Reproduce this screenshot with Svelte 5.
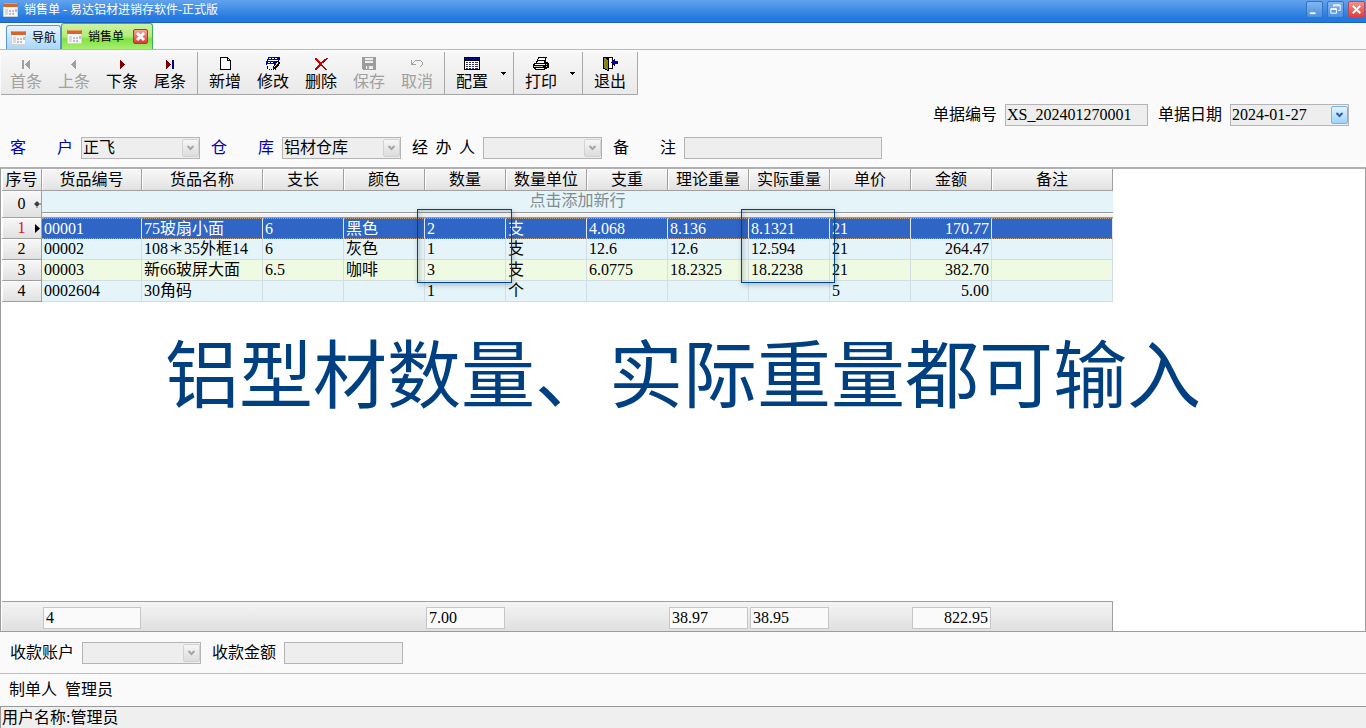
<script>
  const columns = [
    { name: '货品编号', width: 100 },
    { name: '货品名称', width: 121 },
    { name: '支长', width: 81 },
    { name: '颜色', width: 81 },
    { name: '数量', width: 81 },
    { name: '数量单位', width: 81 },
    { name: '支重', width: 81 },
    { name: '理论重量', width: 81 },
    { name: '实际重量', width: 81 },
    { name: '单价', width: 81 },
    { name: '金额', width: 81 },
    { name: '备注', width: 121 }
  ];
  const rows = [
    ['00001', '75玻扇小面', '6', '黑色', '2', '支', '4.068', '8.136', '8.1321', '21', '170.77', ''],
    ['00002', '108＊35外框14', '6', '灰色', '1', '支', '12.6', '12.6', '12.594', '21', '264.47', ''],
    ['00003', '新66玻屏大面', '6.5', '咖啡', '3', '支', '6.0775', '18.2325', '18.2238', '21', '382.70', ''],
    ['0002604', '30角码', '', '', '1', '个', '', '', '', '5', '5.00', '']
  ];
  const totals = ['4', '', '', '', '7.00', '', '', '38.97', '38.95', '', '822.95', ''];
  const groups = [
    [
      { icon: 'first', text: '首条', off: true },
      { icon: 'prev', text: '上条', off: true },
      { icon: 'next', text: '下条' },
      { icon: 'last', text: '尾条' }
    ],
    [
      { icon: 'new', text: '新增' },
      { icon: 'edit', text: '修改' },
      { icon: 'delete', text: '删除' },
      { icon: 'save', text: '保存', off: true },
      { icon: 'undo', text: '取消', off: true }
    ],
    [{ icon: 'config', text: '配置', menu: true }],
    [{ icon: 'print', text: '打印', menu: true }],
    [{ icon: 'exit', text: '退出' }]
  ];
  const combos = [
    { id: 'customer', chars: ['客', '户'], value: '正飞', key: true },
    { id: 'store', chars: ['仓', '库'], value: '铝材仓库', key: true },
    { id: 'agent', chars: ['经', '办', '人'], value: '' }
  ];
</script>

{#snippet form()}
  <svg class="form-icon" viewBox="0 0 16 16" aria-hidden="true">
    <rect x="0" y="1" width="15" height="14" rx="1" fill="#d5d2cf" />
    <rect x="1" y="5" width="13" height="9" fill="#f7f7f8" />
    <rect x="0" y="1" width="15" height="4" rx="1" fill="#d9642b" />
    <rect x="1" y="1" width="13" height="1" fill="#ef9a62" />
    <path d="M2 7h3v6H2z" fill="#d6dae4" />
    <path d="M6 8h2v2H6zM9 8h2v2H9zM12 7h2v3h-2zM6 11h2v2H6zM9 11h2v2H9z" fill="#b9bfcf" />
  </svg>
{/snippet}

{#snippet chevron()}
  <svg viewBox="0 0 15 17" aria-hidden="true">
    <path d="M4 6h2v1h1v1h1V7h1V6h2v2h-1v1H9v1H8v1H7v-1H6V9H5V8H4z" fill="currentColor" />
  </svg>
{/snippet}

{#snippet glyph(name)}
  <svg class="glyph" viewBox="0 0 16 16" shape-rendering="crispEdges" aria-hidden="true">
    {#if name === 'first'}
      <path d="M4 4h2v9H4zM12 4v9h-1v-1h-1v-1H9v-1H8V9H7V8h1V7h1V6h1V5h1V4z" fill="#a0a0a0" />
    {:else if name === 'prev'}
      <path d="M10 4v9H9v-1H8v-1H7v-1H6V9H5V8h1V7h1V6h1V5h1V4z" fill="#a0a0a0" />
    {:else if name === 'next'}
      <path d="M6 4v9h1v-1h1v-1h1v-1h1V9h1V8h-1V7H9V6H8V5H7V4z" fill="#800000" />
    {:else if name === 'last'}
      <path d="M4 4v9h1v-1h1v-1h1v-1h1V9h1V8H8V7H7V6H6V5H5V4z" fill="#800000" />
      <path d="M10 4h2v9h-2z" fill="#000080" />
    {:else if name === 'new'}
      <path d="M3 1h8v1h1v1h1v1h1v10H3z" fill="#000" />
      <path d="M4 2h6v3h3v8H4z" fill="#fff" />
      <path d="M11 3h1v1h-1z" fill="#fff" />
    {:else if name === 'edit'}
      <path d="M3 1h12v3h-1v2h-1v3H1V5h1V3h1z" fill="#0000b4" />
      <path d="M4 2h2v1H4zM7 2h2v1H7zM10 2h2v1h-2zM3 4h10v1H3zM3 6h2v1H3zM6 6h2v1H6zM2 8h7v1H2z" fill="#fff" />
      <path d="M12 5h2v1h1v2h-1v2h-1v1h-1v1h-1v1H8v-3h1V9h1V8h1V6h1z" fill="#000" />
      <path d="M12 6h1v2h-1v1h-1v1h-1v1H9v-1h1V9h1V7h1z" fill="#ffe94a" />
      <path d="M2 10h1v3H2zM4 13h1v1H4zM6 13h1v1H6zM8 13h1v1H8zM10 13h1v1h-1z" fill="#00005c" />
    {:else if name === 'delete'}
      <path d="M2 2h2v1h1v1h1v1h1v1h2V5h1V4h1V3h2V2h2v1h-1v1h-1v1h-1v1h-1v1H9v2h1v1h1v1h1v1h1v1h1v1h-2v-1h-1v-1h-1v-1H9v-1H7v1H6v1H5v1H4v1H2v-2h1v-1h1v-1h1V9h1V7H5V6H4V5H3V4H2z" fill="#c40000" />
    {:else if name === 'save'}
      <path d="M1 1h14v13H2v-1H1z" fill="#9c9c9c" />
      <path d="M4 2h8v5H4zM5 10h7v3H5z" fill="#ededed" />
      <path d="M4 4h8v1H4zM6 10h2v3H6z" fill="#a8a8a8" />
    {:else if name === 'undo'}
      <path d="M2 4h1v3h1V6h1V5h1V4h6v1h1v1h1v3h-1v1h-1v1h-1v-1h1V9h1V6h-1V5H6v1H5v1H4v1h3v1H2z" fill="#a0a0a0" />
    {:else if name === 'config'}
      <path d="M0 1h16v13H0z" fill="#000" />
      <path d="M1 2h14v2H1z" fill="#0000a0" />
      <path d="M1 5h14v8H1z" fill="#fff" />
      <path d="M2 6h2v1H2zM5 6h2v1H5zM8 6h2v1H8zM11 6h3v1h-3zM2 8h2v1H2zM5 8h2v1H5zM8 8h2v1H8zM11 8h3v1h-3zM2 10h2v1H2zM5 10h2v1H5zM8 10h2v1H8zM11 10h3v1h-3zM2 12h2v1H2zM5 12h2v1H5zM8 12h2v1H8zM11 12h3v1h-3z" fill="#30306c" />
    {:else if name === 'print'}
      <path d="M5 1h9v1h-1v4h2v1h1v5h-2v1h-2v1H2v-1H1v-1H0V8h1V7h2V5h1V3h1z" fill="#000" />
      <path d="M6 2h6v1H6zM5 3h7v1H5zM5 5h6v1H5zM4 6h7v1H4zM2 8h10v1H2zM3 12h8v1H3z" fill="#fff" />
      <path d="M1 10h9v1H1zM13 8h1v1h-1zM13 10h1v1h-1z" fill="#c6c68a" />
    {:else}
      <path d="M1 1h10v12H7v2H5v-1H3v-1H1z" fill="#000" />
      <path d="M7 2h3v10H7z" fill="#fff" />
      <path d="M2 2h2v1h1v1h1v10H5v-1H3v-1H2z" fill="#85851a" />
      <path d="M13 3v2h3v3h-3v2h-1V9h-1V8h-1V7H9V6h1V5h1V4h1V3z" fill="#0000a8" />
    {/if}
  </svg>
{/snippet}

<div class="window">
  <header class="title">
    {@render form()}
    <span class="caption">销售单 - 易达铝材进销存软件-正式版</span>
    <button class="win" aria-label="最小化"><svg viewBox="0 0 16 16"><path d="M3 11h6v2H3z" fill="#fff" /></svg></button>
    <button class="win" aria-label="还原"><svg viewBox="0 0 16 16"><path d="M6 3h7v6h-2M6 3v2M6 4h7M3 7h6v5H3zM3 8h6" fill="none" stroke="#fff" /></svg></button>
    <button class="win close" aria-label="关闭"><svg viewBox="0 0 16 16"><path d="M4 4l8 8M12 4l-8 8" stroke="#fff" stroke-width="2" /></svg></button>
  </header>

  <nav class="tabs">
    <button class="tab">{@render form()}<span>导航</span></button>
    <div class="tab active">
      {@render form()}<span>销售单</span>
      <button class="tab-close" aria-label="关闭销售单"><svg viewBox="0 0 13 13"><path d="M3 3l7 7M10 3l-7 7" stroke="#fff" stroke-width="3" /></svg></button>
    </div>
  </nav>

  <div class="toolbar" role="toolbar" aria-label="单据操作">
    {#each groups as group}
      <div class="group">
        {#each group as tool}
          <button class="tool" disabled={tool.off}>{@render glyph(tool.icon)}<span>{tool.text}</span></button>
          {#if tool.menu}
            <button class="more" aria-label="{tool.text}选项"><svg viewBox="0 0 5 3"><path d="M0 0h5v1H4v1H3v1H2V2H1V1H0z" /></svg></button>
          {/if}
        {/each}
      </div>
    {/each}
  </div>

  <div class="fields bill">
    <label for="bill-no">单据编号</label>
    <input id="bill-no" class="bill-no" value="XS_202401270001" />
    <label for="bill-date">单据日期</label>
    <div class="combo">
      <input id="bill-date" value="2024-01-27" />
      <button class="drop live" aria-label="选择日期">{@render chevron()}</button>
    </div>
  </div>

  <div class="fields">
    {#each combos as combo}
      <label class="spread" class:key={combo.key} for={combo.id}>
        {#each combo.chars as char}<span>{char}</span>{/each}
      </label>
      <div class="combo">
        <select id={combo.id}><option>{combo.value}</option></select>
        <span class="drop">{@render chevron()}</span>
      </div>
    {/each}
    <label class="spread" for="note"><span>备</span><span>注</span></label>
    <input id="note" class="note" />
  </div>

  <main class="sheet">
    <table>
      <colgroup>
        <col style="width: 40px" />
        {#each columns as column}<col style="width: {column.width}px" />{/each}
      </colgroup>
      <thead>
        <tr><th>序号</th>{#each columns as column}<th>{column.name}</th>{/each}</tr>
      </thead>
      <tbody>
        <tr class="adder">
          <th>0<svg class="mark" viewBox="0 0 7 7"><circle cx="3" cy="3" r="2" /><path d="M0 3h7M3 0v7" stroke="#555" /></svg></th>
          <td colspan="12"><div>点击添加新行</div></td>
        </tr>
        {#each rows as row, index}
          <tr class:current={index === 0} class:alt={index === 2}>
            <th>
              {index + 1}{#if index === 0}<svg class="mark" viewBox="0 0 7 9"><path d="M1 0l5 4.500-5 4.500z" /></svg>{/if}
            </th>
            {#each row as cell, c}<td class:money={c === 10}>{cell}</td>{/each}
          </tr>
        {/each}
      </tbody>
    </table>
    <div class="frame quantity"></div>
    <div class="frame weight"></div>
    <h1>铝型材数量、实际重量都可输入</h1>
    <table class="totals">
      <colgroup>
        <col style="width: 40px" />
        {#each columns as column}<col style="width: {column.width}px" />{/each}
      </colgroup>
      <tbody>
        <tr>
          <td></td>
          {#each totals as total, c}
            <td class:money={c === 10}>{#if total}<div>{total}</div>{/if}</td>
          {/each}
        </tr>
      </tbody>
    </table>
  </main>

  <div class="fields payment">
    <label for="account">收款账户</label>
    <div class="combo">
      <select id="account"><option></option></select>
      <span class="drop">{@render chevron()}</span>
    </div>
    <label for="amount">收款金额</label>
    <input id="amount" class="amount" />
  </div>
  <div class="maker"><span>制单人</span><span>管理员</span></div>
  <footer>用户名称:管理员</footer>
</div>

<style>
  :global(body) { margin: 0; background: #fafafa; }
  .window {
    display: flex;
    flex-direction: column;
    min-height: 100vh;
    box-sizing: border-box;
    font: 16px/20px "Liberation Serif", "Noto Sans CJK SC", sans-serif;
    color: #000;
    background: #fafafa;
  }
  .window * { box-sizing: border-box; }
  button, input, select { font: inherit; color: inherit; margin: 0; padding: 0; border-radius: 0; }
  button { border: 0; background: none; }
  svg { display: block; }
  .form-icon { width: 16px; height: 16px; flex: none; }

  .title {
    display: flex;
    align-items: center;
    gap: 4px;
    height: 23px;
    padding: 0 1px 3px 3px;
    color: #fff;
    background: linear-gradient(#62a3ee, #3b89e4 50%, #2379e0 80%, #2379e0);
    border-bottom: 1px solid #1a62c0;
  }
  .caption { flex: 1; font-size: 12px; padding-left: 1px; }
  .win {
    width: 17px;
    height: 17px;
    border: 1px solid #3672bd;
    border-radius: 2px;
    background: linear-gradient(#84b6f0, #4a90e2);
  }
  .win svg { width: 15px; height: 15px; }
  .win.close { background: linear-gradient(#f98e88, #e63c37); border-color: #b04a60; }

  .tabs {
    display: flex;
    align-items: flex-end;
    height: 27px;
    padding-left: 6px;
    border-bottom: 1px solid #b9b9b9;
    font-size: 12px;
  }
  .tab {
    display: flex;
    align-items: center;
    gap: 5px;
    height: 24px;
    padding: 0 4px;
    border: 1px solid #5b95cc;
    border-bottom: 0;
    border-radius: 3px 3px 0 0;
    background: linear-gradient(#e6f5ff, #a9d6f9);
  }
  .tab.active {
    height: 26px;
    padding: 0 4px 0 5px;
    border-color: #3fae63;
    background: linear-gradient(#cdf3a4, #b2ec74 50%, #80e046 60%, #a7ee70);
  }
  .tab-close {
    width: 15px;
    height: 15px;
    margin-left: 4px;
    border: 1px solid #b23434;
    border-radius: 2px;
    background: linear-gradient(#f4a49c, #dc3a35);
  }
  .tab-close svg { width: 13px; height: 13px; }

  .toolbar {
    display: flex;
    align-self: flex-start;
    height: 43px;
    margin-top: 2px;
    margin-left: 1px;
    background: linear-gradient(#f7f7f7, #e9e9e9);
    border-bottom: 1px solid #a6a6a6;
  }
  .group { display: flex; padding: 0 3px; border-right: 1px solid #a9a9a9; }
  .group:first-child { padding-left: 1px; }
  .tool {
    display: flex;
    flex-direction: column;
    align-items: center;
    width: 48px;
    padding-top: 4px;
  }
  .tool:disabled { color: #a0a0a0; }
  .glyph { width: 16px; height: 16px; }
  .more { width: 14px; }
  .more svg { width: 5px; height: 3px; margin: 0 auto; }

  .fields { display: flex; align-items: center; gap: 8px; padding: 0 10px; height: 32px; }
  .bill { justify-content: flex-end; padding-right: 17px; height: 36px; margin-top: 2px; }
  .bill + .fields { height: 30px; }
  .fields input, select {
    height: 22px;
    border: 1px solid #b4b4b4;
    background: #eee;
    padding: 0 1px;
    outline: 0;
  }
  select { appearance: none; }
  .fields .bill-no { width: 143px; margin-right: 2px; }
  .fields .note { width: 198px; }
  .fields .amount { width: 119px; }
  .spread { display: flex; justify-content: space-between; width: 63px; }
  .key { color: #0000b4; }
  .combo { position: relative; width: 119px; margin-right: 3px; }
  .bill .combo { margin-right: 0; }
  .combo select, .combo input { width: 100%; display: block; }
  .drop {
    position: absolute;
    right: 1px;
    top: 2px;
    width: 17px;
    height: 18px;
    border: 1px solid #d2d2d2;
    border-radius: 2px;
    color: #a2a2a2;
    background: linear-gradient(#f6f6f6, #dcdcdc);
    pointer-events: none;
  }
  .drop svg { width: 15px; height: 16px; }
  .drop.live { color: #1f5c9e; border-color: #7cb4e2; background: linear-gradient(#e2f4ff, #9fd2f8); pointer-events: auto; }

  .sheet {
    position: relative;
    display: flex;
    flex-direction: column;
    flex: 1;
    margin-top: 4px;
    border: 1px solid #9c9c9c;
    border-top: 2px solid #b0b0b0;
    padding-left: 1px;
    background: #fff;
    overflow: hidden;
  }
  table { table-layout: fixed; width: 1111px; border-collapse: separate; border-spacing: 0; }
  th, td { padding: 0 2px; font-weight: 400; white-space: nowrap; height: 21px; line-height: 20px; }
  th {
    position: relative;
    border-right: 1px solid #a0a0a0;
    border-bottom: 1px solid #a0a0a0;
    background: linear-gradient(#f8f8f8, #ededed 50%, #e1e1e1);
    box-shadow: inset 1px 1px #fff;
  }
  thead th { height: 22px; padding: 0; line-height: 21px; }
  tbody td { background: #e5f4f9; border-right: 1px solid #d3dde3; border-bottom: 1px solid #d3dde3; }
  .alt td { background: #effae2; }
  .current td {
    color: #fff;
    background: #2f65c5;
    border-top: 1px dotted #b9a184;
    border-bottom: 1px dotted #b9a184;
    border-right-color: #e0e8f5;
    line-height: 19px;
  }
  .current th { color: #e01020; }
  .adder th { height: 27px; }
  .adder td {
    padding: 0;
    height: 27px;
    vertical-align: top;
    text-align: center;
    color: #7f8c90;
    border: 0;
    background: linear-gradient(#fff, #ececec) bottom / 100% 5px no-repeat, #e5f4f9;
    border-bottom: 1px solid #999;
  }
  .adder div { height: 22px; border-bottom: 1px solid #999; }
  .mark { position: absolute; right: 0; top: 50%; width: 7px; height: 9px; margin-top: -4px; color: #000; }
  .money { text-align: right; }

  .frame {
    position: absolute;
    top: 40px;
    width: 95px;
    height: 74px;
    border: 1px solid #00457f;
    box-shadow: 1px 2px 5px #00254044, inset 2px 2px 5px #00254033;
  }
  .quantity { left: 416px; }
  .weight { left: 740px; width: 94px; }
  h1 {
    position: absolute;
    top: 158px;
    left: 0;
    right: 0;
    margin: 0;
    text-align: center;
    font-size: 74px;
    line-height: 100px;
    font-weight: 400;
    color: #004080;
    white-space: nowrap;
  }
  .totals { margin-top: auto; border-top: 1px solid #a0a0a0; background: linear-gradient(#f4f4f4, #e0e0e0); }
  .totals td { height: 29px; padding: 3px 1px 0; border: 0; background: none; }
  .totals td:last-child { border-right: 1px solid #a0a0a0; }
  .totals div { height: 22px; border: 1px solid #c6c6c6; background: #fafafa; padding: 0 2px; }

  .payment { height: 42px; border-bottom: 1px solid #bdbdbd; }
  .maker { display: flex; gap: 8px; height: 32px; padding: 0 9px; line-height: 32px; }
  footer { height: 22px; padding: 0 1px; line-height: 21px; background: #efefef; border-top: 1px solid #999; border-left: 1px solid #999; }
</style>
